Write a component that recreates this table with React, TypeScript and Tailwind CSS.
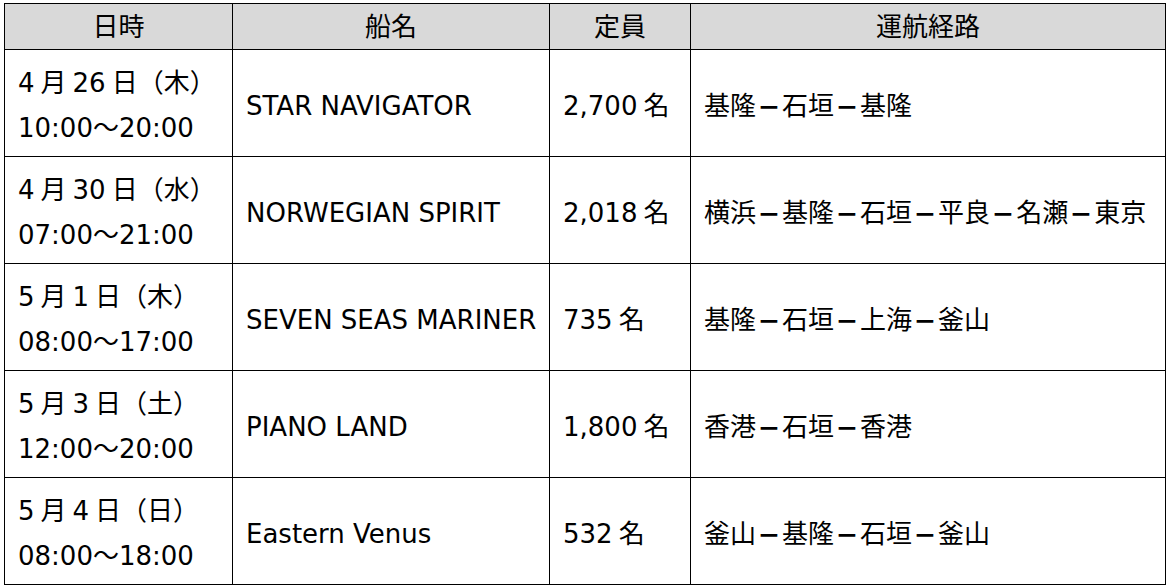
import React from "react";

const FONT = {
  fontFamily: '"DejaVu Sans", "Noto Sans CJK JP", sans-serif',
};

type Row = {
  date: string[];
  time: string;
  ship: string;
  cap: string;
  route: string[];
};

const rows: Row[] = [
  { date: ["4", "月", "26", "日（木）"], time: "10:00～20:00", ship: "STAR NAVIGATOR", cap: "2,700", route: ["基隆", "石垣", "基隆"] },
  { date: ["4", "月", "30", "日（水）"], time: "07:00～21:00", ship: "NORWEGIAN SPIRIT", cap: "2,018", route: ["横浜", "基隆", "石垣", "平良", "名瀬", "東京"] },
  { date: ["5", "月", "1", "日（木）"], time: "08:00～17:00", ship: "SEVEN SEAS MARINER", cap: "735", route: ["基隆", "石垣", "上海", "釜山"] },
  { date: ["5", "月", "3", "日（土）"], time: "12:00～20:00", ship: "PIANO LAND", cap: "1,800", route: ["香港", "石垣", "香港"] },
  { date: ["5", "月", "4", "日（日）"], time: "08:00～18:00", ship: "Eastern Venus", cap: "532", route: ["釜山", "基隆", "石垣", "釜山"] },
];

function Header({ children }: { children: React.ReactNode }) {
  return (
    <div className="flex items-center justify-center border-r border-b border-black bg-[#d9d9d9] text-[26px] leading-[44px] text-black">
      {children}
    </div>
  );
}

function Cell({ children }: { children: React.ReactNode }) {
  return (
    <div className="flex items-center border-r border-b border-black pl-[13px] pt-[5px] text-[26px] leading-[44px] text-black whitespace-nowrap overflow-hidden">
      {children}
    </div>
  );
}

export default function App() {
  return (
    <div className="w-[1170px] h-[588px] bg-white pt-[3px] pl-[4px]" style={FONT}>
      <div className="grid grid-cols-[228px_317px_141px_475px] grid-rows-[46px_repeat(5,107px)] border-l border-t border-black w-[1162px]">
        <Header>日時</Header>
        <Header>船名</Header>
        <Header>定員</Header>
        <Header>運航経路</Header>
        {rows.map((r, i) => (
          <React.Fragment key={i}>
            <div className="flex flex-col justify-center border-r border-b border-black pl-[13px] pt-[6px] text-[26px] leading-[45px] text-black whitespace-nowrap">
              <div>
                <span>{r.date[0]}</span>
                <span className="ml-[6px]">{r.date[1]}</span>
                <span className="ml-[6px]">{r.date[2]}</span>
                <span className="ml-[6px]">{r.date[3]}</span>
              </div>
              <div>{r.time}</div>
            </div>
            <Cell>{r.ship}</Cell>
            <Cell>
              <span>{r.cap}</span>
              <span className="ml-[6px]">名</span>
            </Cell>
            <Cell>
              {r.route.map((p, j) => (
                <React.Fragment key={j}>
                  {j > 0 && (
                    <span className="inline-block font-bold relative top-[2px] scale-x-[0.9]">－</span>
                  )}
                  <span>{p}</span>
                </React.Fragment>
              ))}
            </Cell>
          </React.Fragment>
        ))}
      </div>
    </div>
  );
}
